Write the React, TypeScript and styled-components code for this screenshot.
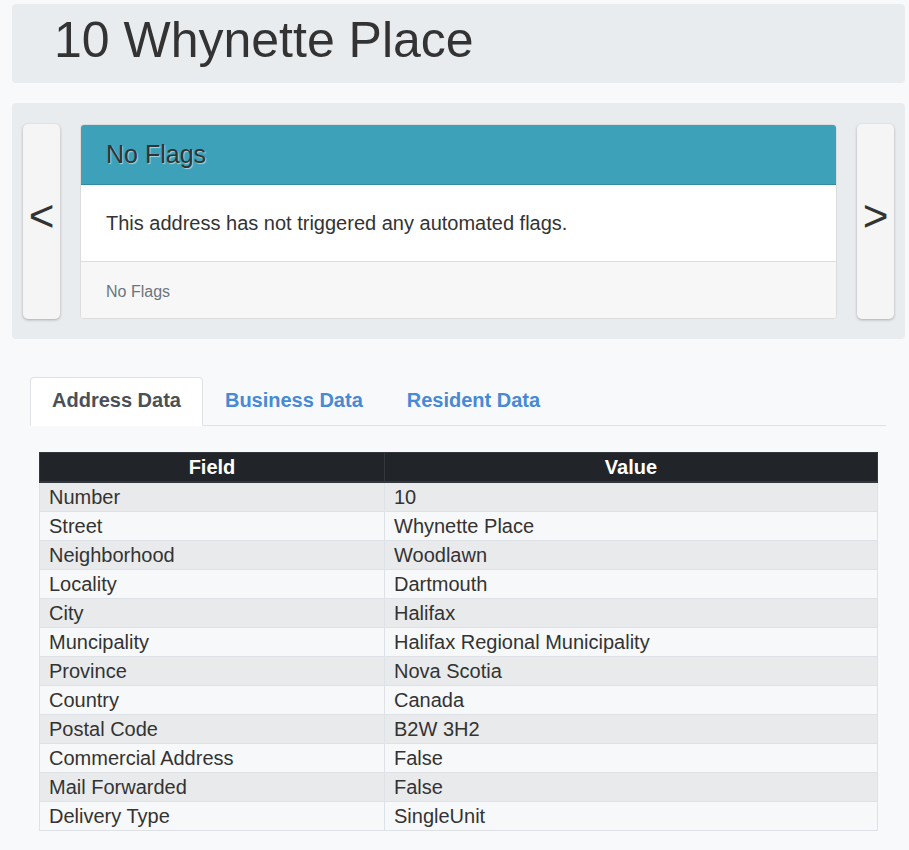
import React, { useState } from 'react';
import styled, { createGlobalStyle } from 'styled-components';

const GlobalStyle = createGlobalStyle`
  html, body {
    margin: 0;
    padding: 0;
    background: #f8f9fa;
    font-family: "Liberation Sans", Arial, sans-serif;
    color: #333;
  }
`;

const Page = styled.div`
  padding: 4px 4px 20px 12px;
`;

const Jumbotron = styled.div`
  height: 79px;
  display: flex;
  align-items: center;
  padding-left: 42px;
  background: #e9ecef;
  border-radius: 4px;
`;

const Title = styled.h1`
  margin: 0;
  font-size: 50px;
  font-weight: 400;
  line-height: 1;
  color: #333;
  padding-bottom: 8px;
`;

const CarouselPanel = styled.div`
  margin-top: 20px;
  display: flex;
  align-items: stretch;
  gap: 20px;
  padding: 21px 11px 20px 11px;
  background: #e9ecef;
  border-radius: 4px;
`;

const NavButton = styled.button`
  flex: 0 0 37px;
  margin: 0;
  padding: 0 0 12px;
  border: none;
  border-radius: 5px;
  background: #f5f5f5;
  box-shadow: 0 1px 3px rgba(0, 0, 0, 0.28);
  font-family: "Liberation Sans", Arial, sans-serif;
  font-size: 44px;
  color: #333;
  cursor: pointer;
  display: flex;
  align-items: center;
  justify-content: center;
`;

const Card = styled.div`
  flex: 1;
  display: flex;
  flex-direction: column;
  border: 1px solid #dcdcdc;
  border-radius: 4px;
  overflow: hidden;
  background: #fff;
`;

const CardHeader = styled.div`
  height: 59px;
  display: flex;
  align-items: center;
  padding-left: 25px;
  background: #3da1b9;
  border-bottom: 1px solid #2f8ca4;
  font-size: 25px;
  color: #333;
  text-shadow: 1px 1px 1px rgba(255, 255, 255, 0.55);
`;

const CardBody = styled.div`
  height: 76px;
  display: flex;
  align-items: center;
  padding-left: 25px;
  font-size: 20px;
  color: #333;
`;

const CardFooter = styled.div`
  height: 57px;
  box-sizing: border-box;
  display: flex;
  align-items: center;
  padding: 4px 0 0 25px;
  background: #f7f7f7;
  border-top: 1px solid #dddddd;
  font-size: 16px;
  color: #6c757d;
`;

const Section = styled.div`
  margin: 38px 19px 0 18px;
`;

const TabBar = styled.div`
  display: flex;
  border-bottom: 1px solid #dee2e6;
`;

const Tab = styled.button<{ $active?: boolean }>`
  height: 49px;
  margin-bottom: -1px;
  padding: 0 21px 2px;
  border: 1px solid ${(p) => (p.$active ? '#dee2e6' : 'transparent')};
  border-bottom-color: ${(p) => (p.$active ? '#fff' : 'transparent')};
  border-radius: 4px 4px 0 0;
  background: ${(p) => (p.$active ? '#fff' : 'transparent')};
  font-family: "Liberation Sans", Arial, sans-serif;
  font-size: 20px;
  font-weight: 700;
  color: ${(p) => (p.$active ? '#495057' : '#468ad6')};
  cursor: pointer;
`;

const Table = styled.table`
  width: calc(100% - 17px);
  margin: 26px 0 0 9px;
  border-collapse: collapse;
  font-size: 20px;
  table-layout: fixed;
`;

const HeadCell = styled.th`
  height: 28px;
  padding: 0;
  background: #212529;
  border: 1px solid #32383e;
  border-bottom: 2px solid #32383e;
  color: #fff;
  font-weight: 700;
  line-height: 26px;
  text-align: center;
`;

const Row = styled.tr<{ $odd: boolean }>`
  background: ${(p) => (p.$odd ? '#e9eaec' : '#f7f8fa')};
`;

const Cell = styled.td`
  height: 28px;
  padding: 0 9px;
  border: 1px solid #dee2e6;
  color: #333;
  line-height: 28px;
`;

const rows: [string, string][] = [
  ['Number', '10'],
  ['Street', 'Whynette Place'],
  ['Neighborhood', 'Woodlawn'],
  ['Locality', 'Dartmouth'],
  ['City', 'Halifax'],
  ['Muncipality', 'Halifax Regional Municipality'],
  ['Province', 'Nova Scotia'],
  ['Country', 'Canada'],
  ['Postal Code', 'B2W 3H2'],
  ['Commercial Address', 'False'],
  ['Mail Forwarded', 'False'],
  ['Delivery Type', 'SingleUnit'],
];

const tabs = ['Address Data', 'Business Data', 'Resident Data'];

export default function App() {
  const [activeTab, setActiveTab] = useState('Address Data');

  return (
    <Page>
      <GlobalStyle />
      <Jumbotron>
        <Title>10 Whynette Place</Title>
      </Jumbotron>

      <CarouselPanel>
        <NavButton>&lt;</NavButton>
        <Card>
          <CardHeader>No Flags</CardHeader>
          <CardBody>This address has not triggered any automated flags.</CardBody>
          <CardFooter>No Flags</CardFooter>
        </Card>
        <NavButton>&gt;</NavButton>
      </CarouselPanel>

      <Section>
        <TabBar>
          {tabs.map((tab) => (
            <Tab key={tab} $active={tab === activeTab} onClick={() => setActiveTab(tab)}>
              {tab}
            </Tab>
          ))}
        </TabBar>

        <Table>
          <colgroup>
            <col style={{ width: '345px' }} />
            <col />
          </colgroup>
          <thead>
            <tr>
              <HeadCell>Field</HeadCell>
              <HeadCell>Value</HeadCell>
            </tr>
          </thead>
          <tbody>
            {rows.map(([field, value], i) => (
              <Row key={field} $odd={i % 2 === 0}>
                <Cell>{field}</Cell>
                <Cell>{value}</Cell>
              </Row>
            ))}
          </tbody>
        </Table>
      </Section>
    </Page>
  );
}
